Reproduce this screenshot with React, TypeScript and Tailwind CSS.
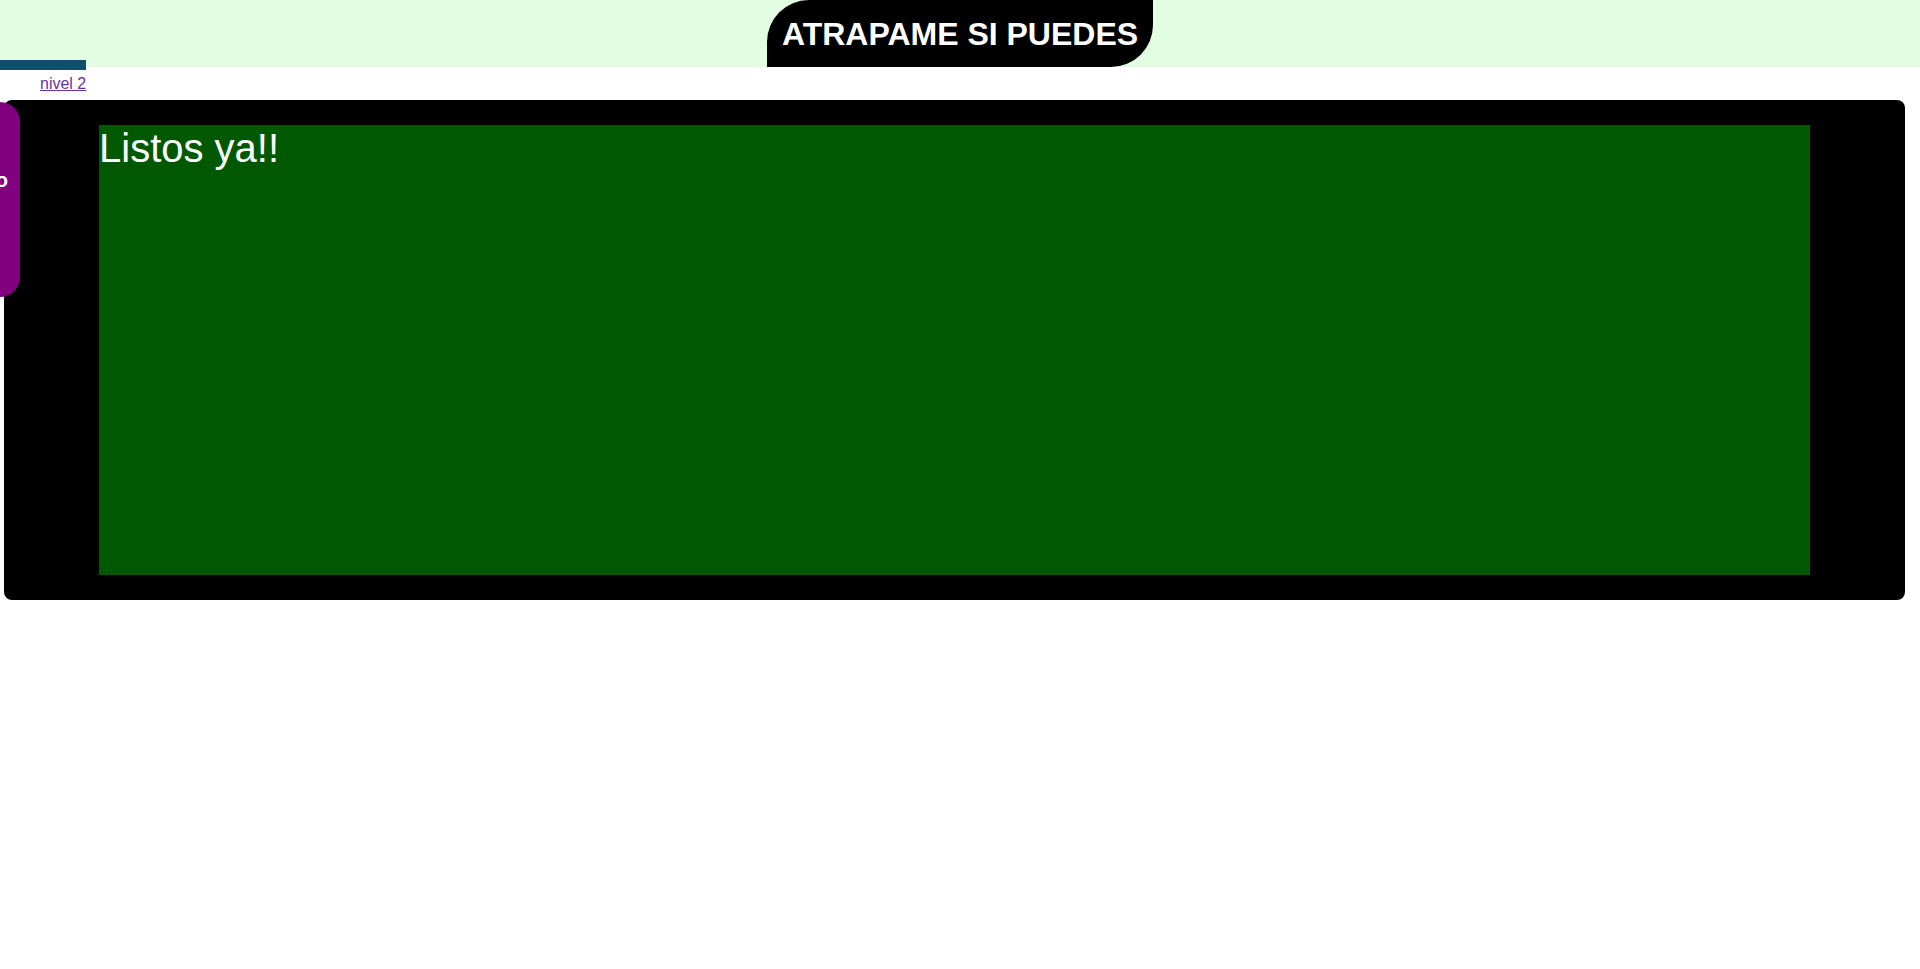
import React from "react";

const App = () => {
	return (
		<div className="min-h-[969px] bg-white font-['Liberation_Sans',Arial,sans-serif]">
			<header className="h-[67px] bg-[#e3fde3] flex justify-center">
				<h1 className="h-[67px] px-[15px] flex items-center bg-black text-white text-[32px] font-bold leading-none rounded-tl-[42px] rounded-br-[42px]">
					ATRAPAME SI PUEDES
				</h1>
			</header>
			<div className="-mt-[7px] h-[10px] w-[86px] bg-[#0f4d69]"></div>
			<div className="pt-[5px] pl-[40px] text-[16px] leading-[18px]">
				<a href="#" className="underline text-[#6633a0]">
					nivel 2
				</a>
			</div>
			<main className="relative mt-[7px] ml-[4px] w-[1901px] h-[500px] bg-black rounded-lg px-[95px] py-[25px]">
				<div className="h-[450px] bg-[#005900] text-white text-[40px] leading-[46px]">
					Listos ya!!
				</div>
				<aside className="absolute left-[-184px] top-[2px] w-[200px] h-[195px] bg-[#800080] rounded-[20px] overflow-hidden">
					<span className="absolute right-[12px] top-[67px] text-white text-[20px] font-bold leading-[23px]">
						Tiempo
					</span>
				</aside>
			</main>
		</div>
	);
};

export default App;
